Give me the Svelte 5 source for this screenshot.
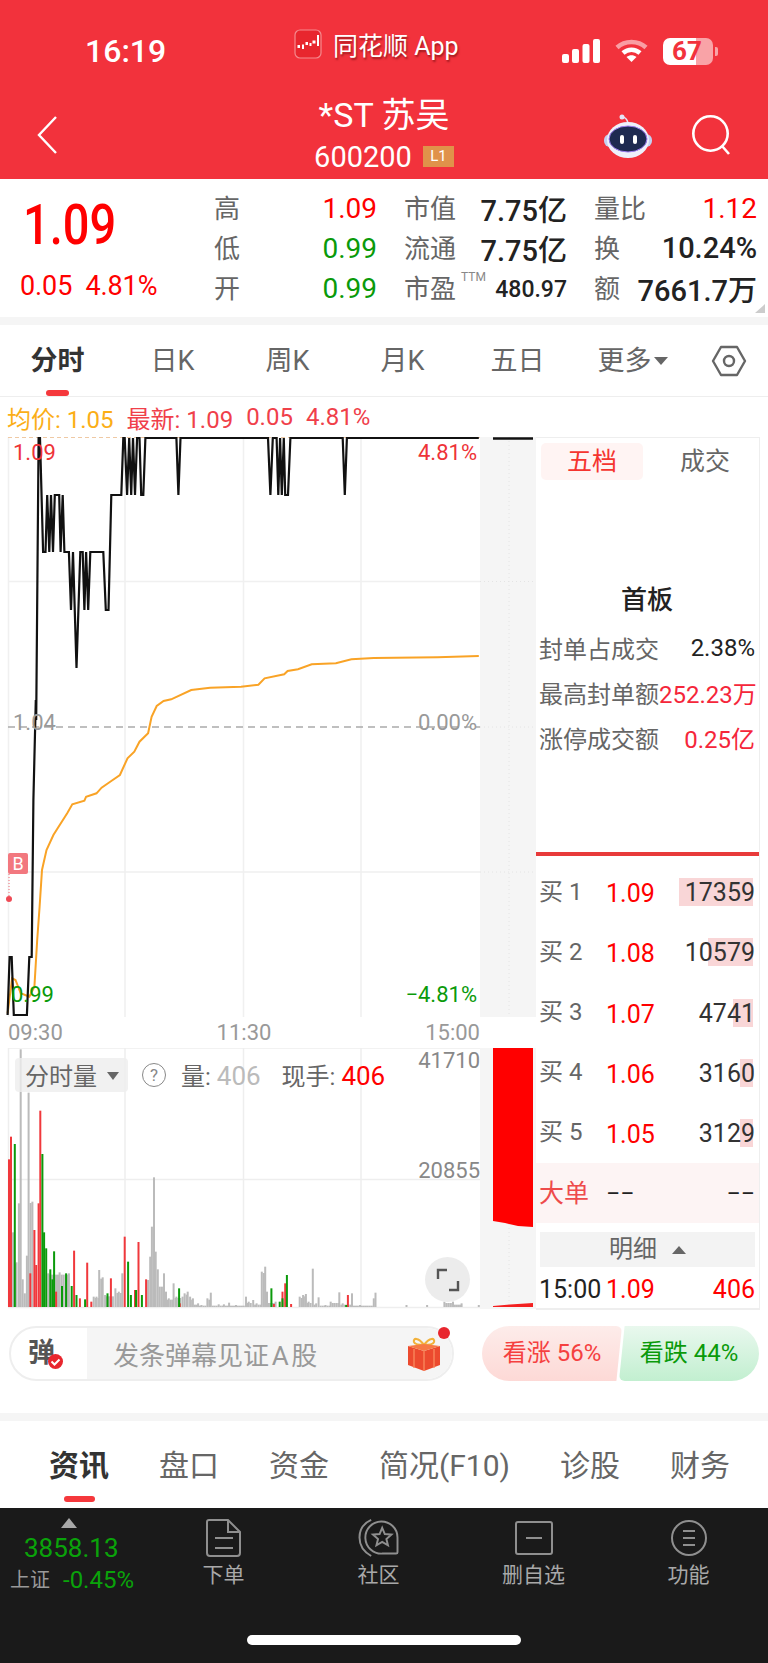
<script>
  // chart points read off the reference, x in crop units (2.903/px), y in page px
  const cx = (x) => +(x / 2.903).toFixed(1);
  const T = 438, A = 495, B = 552, C = 610, D = 668;

  const blackRaw = [
    [22,1015],[28,957],[34,957],[40,1015],[78,1015],[85,957],[92,957],[97,800],[104,700],[105,720],[112,T],[116,T],
    [125,B],[132,B],[137,A],[143,B],[148,A],[154,B],[159,A],[172,A],[176,B],[182,A],[187,B],[200,B],[206,C],[212,B],
    [222,D],[233,B],[240,B],[245,C],[250,B],[256,C],[262,B],[300,B],[307,C],[315,C],[323,A],[352,A],[358,T],[362,T],
    [369,A],[375,T],[381,A],[386,T],[392,A],[398,T],[405,T],[410,A],[416,A],[422,T],[512,T],[518,A],[524,T],
    [778,T],[785,A],[792,T],[803,T],[808,A],[813,T],[818,A],[824,T],[828,A],[836,A],[843,T],[995,T],[1001,A],[1007,T],[1390,T]
  ];
  const blackPath = blackRaw.map(([x, y]) => `${cx(x)},${y}`).join(' ');

  const avgLow = [
    [22,940],[35,835],[45,840],[60,880],[85,890],[100,860],[108,720],[115,620],[122,510],[135,450],[155,405],[170,380],
    [195,340],[210,313],[245,302],[250,290],[280,280],[295,263],[320,245],[348,225],[370,175],[390,155],[405,125],
    [430,100],[440,50],[455,18],[475,3],[497,-2]
  ].map(([x, y]) => `${cx(x)},${(y / 3 + 700).toFixed(1)}`);
  const avgHigh = [
    [555,1110],[610,1103],[700,1100],[750,1094],[768,1075],[825,1063],[835,1053],[865,1048],[905,1033],[975,1030],
    [1020,1018],[1085,1014],[1270,1012],[1390,1008]
  ].map(([x, y]) => `${cx(x)},${(y / 3 + 320).toFixed(1)}`);
  const avgPath = [...avgLow, ...avgHigh].join(' ');

  const vy = (y) => y / 3 + 1040;
  const gray = [[38,577],[48,667],[55,490],[60,28],[66,718],[72,760],[78,647],[83,158],[94,485],[140,700],[173,697],[200,700],[272,770],[280,770],[288,690],[298,712],[305,765],[335,745],[345,755],[355,700],[430,720],[436,650],[441,560],[447,412],[452,635],[458,688],[464,740],[470,740],[476,700],[482,755],[490,775],[504,730],[512,770],[530,770],[536,760],[545,755],[552,770],[560,775],[575,790],[585,795],[602,775],[612,758],[635,793],[650,793],[665,788],[685,795],[714,770],[722,785],[735,780],[745,790],[760,695],[770,680],[775,755],[800,785],[870,770],[880,765],[888,762],[896,785],[908,686],[918,790],[925,772],[945,795],[960,785],[985,757],[995,790],[1022,760],[1045,795],[1085,775],[1090,758],[1180,795],[1240,795],[1290,785],[1315,785],[1340,790],[1390,795]];
  const red = [[26,358],[32,290],[100,570],[88,700],[105,675],[112,490],[117,212],[215,632],[253,668],[322,715],[362,590],[402,606],[424,718],[392,750],[820,755],[828,730],[1010,765],[163,755],[232,775],[265,785],[522,790],[795,792],[845,792]];
  const green = [[43,312],[123,342],[128,577],[134,625],[146,688],[157,634],[152,718],[180,738],[192,700],[208,738],[222,765],[247,778],[312,760],[372,665],[380,765],[395,750],[412,765],[520,745],[788,745],[812,785],[820,775],[833,705],[1005,795]];

  // the minute bars sit side by side, so fill the slots between the read-off peaks
  const grayFill = [];
  gray.forEach(([x, y], i) => {
    const next = gray[i + 1];
    if (!next || next[0] - x > 40) return;
    for (let s = x + 5.7; s < next[0] - 2; s += 5.7) grayFill.push([s, Math.max(y, next[1]) + 4]);
  });

  const bars = [
    ...[...gray, ...grayFill].map(([x, y]) => ({ x: cx(x) - 1, y: vy(Math.min(y, 797)), fill: '#bbbbbb' })),
    ...red.map(([x, y]) => ({ x: cx(x) - 1, y: vy(y), fill: '#f0383c' })),
    ...green.map(([x, y]) => ({ x: cx(x) - 1, y: vy(y), fill: '#0b9a0b' }))
  ];

  const quote = [
    [['高', '1.09', 'up'], ['低', '0.99', 'down'], ['开', '0.99', 'down']],
    [['市值', '7.75亿', 'dark'], ['流通', '7.75亿', 'dark'], ['市盈', '480.97', 'dark ttm']],
    [['量比', '1.12', 'up'], ['换', '10.24%', 'dark'], ['额', '7661.7万', 'dark']]
  ];
  const periods = ['分时', '日K', '周K', '月K', '五日'];
  const seal = [
    ['封单占成交', '2.38%', 'dark'],
    ['最高封单额', '252.23万', 'hot'],
    ['涨停成交额', '0.25亿', 'hot']
  ];
  const bids = [
    ['买 1', '1.09', '17359', 74],
    ['买 2', '1.08', '10579', 45],
    ['买 3', '1.07', '4741', 20],
    ['买 4', '1.06', '3160', 13],
    ['买 5', '1.05', '3129', 13]
  ];
  const infoTabs = ['盘口', '资金', '简况(F10)', '诊股', '财务'];
</script>

<div class="page">
  <header class="head">
    <div class="status">
      <span class="time">16:19</span>
      <div class="app-pill">
        <svg class="app-icon" width="28" height="30" viewBox="0 0 28 30">
          <rect x="1" y="1" width="26" height="28" rx="5" fill="#e8262e" stroke="#f58a8e" stroke-width="1.200" />
          <g fill="#fff">
            <rect x="3.500" y="16" width="2.500" height="3" />
            <rect x="8" y="15.500" width="2" height="4.500" />
            <rect x="11.500" y="13" width="2.500" height="3" />
            <rect x="15.500" y="14" width="2" height="3" />
            <rect x="18.500" y="11.500" width="3" height="3" />
            <rect x="23" y="6" width="2" height="11" />
          </g>
        </svg>
        <span class="app-name">同花顺 App</span>
      </div>
      <div class="sys">
        <svg width="38" height="24" viewBox="0 0 38 24" fill="#fff">
          <rect x="0" y="15" width="7" height="9" rx="2" />
          <rect x="10" y="10" width="7" height="14" rx="2" />
          <rect x="20.500" y="5" width="7" height="19" rx="2" />
          <rect x="31" y="0" width="7" height="24" rx="2" />
        </svg>
        <svg class="wifi" width="33" height="24" viewBox="0 0 33 24" fill="none">
          <path d="M2 8.500C10 1 23 1 31 8.500" stroke="#f99ea3" stroke-width="4.500" />
          <path d="M8 14c5-4.500 12-4.500 17 0" stroke="#fff" stroke-width="4.500" />
          <path d="M16.500 23l-5-5c3-2.500 7-2.500 10 0z" fill="#fff" />
        </svg>
        <div class="battery">
          <div class="battery-body"><span>67</span></div>
          <i></i>
        </div>
      </div>
    </div>
    <nav class="nav">
      <svg class="back" width="20" height="38" viewBox="0 0 20 38" fill="none" stroke="#fff" stroke-width="2.400">
        <path d="M19 1L2 19l17 18" />
      </svg>
      <div class="title">
        <span class="name">*ST 苏吴</span>
        <div class="code"><span>600200</span><b>L1</b></div>
      </div>
      <div class="nav-icons">
        <svg class="robot" width="48" height="44" viewBox="0 0 48 44">
          <path d="M18 3c3 0 5 2 6 6" stroke="#e4e4f6" stroke-width="1.500" fill="none" />
          <circle cx="18" cy="3" r="2.500" fill="#e4e4f6" />
          <rect x="0" y="20" width="48" height="13" rx="6" fill="#c4d0f0" />
          <ellipse cx="24" cy="26" rx="21" ry="18" fill="#eef0fb" />
          <ellipse cx="24" cy="25" rx="19" ry="13" fill="#1e2a50" stroke="#9c7cf0" stroke-width="1" />
          <rect x="16" y="21" width="4" height="9" rx="2" fill="#fff" />
          <rect x="29" y="21" width="4" height="9" rx="2" fill="#fff" />
        </svg>
        <svg width="40" height="40" viewBox="0 0 40 40" fill="none" stroke="#fff" stroke-width="2.600">
          <circle cx="18.500" cy="18.500" r="17.200" />
          <path d="M30 31l7 8" />
        </svg>
      </div>
    </nav>
  </header>

  <section class="quote">
    <div class="last">
      <span class="big">1.09</span>
      <span class="chg">0.05&nbsp;&nbsp;4.81%</span>
    </div>
    {#each quote as col}
      <div class="q-col">
        {#each col as [label, value, tone]}
          <div class="q-row">
            <span class="q-label">{label}{#if tone.includes('ttm')}<sup>TTM</sup>{/if}</span>
            <span class="q-val {tone}">{value}</span>
          </div>
        {/each}
      </div>
    {/each}
    <i class="corner"></i>
  </section>
  <div class="band"></div>

  <div class="periods">
    {#each periods as p, i}
      <span class="period" class:on={i === 0}>{p}</span>
    {/each}
    <span class="period more">更多<i class="caret"></i></span>
    <svg class="hex" width="36" height="32" viewBox="0 0 36 32" fill="none" stroke="#666" stroke-width="2.400" stroke-linejoin="round">
      <path d="M10 2h16l8 14-8 14H10L2 16z" />
      <circle cx="18" cy="16" r="5" />
    </svg>
  </div>

  <div class="legend">
    <span class="avg">均价: 1.05</span>
    <span class="latest">最新: 1.09</span>
    <span class="latest">0.05</span>
    <span class="latest">4.81%</span>
  </div>

  <div class="board">
    <div class="charts">
      <div class="price">
        <svg viewBox="0 437 536 580" width="536" height="580">
          <rect x="480" y="437" width="56" height="580" fill="#f5f5f5" />
          <path d="M8.500 437V1017M125 437V1017M243.500 437V1017M361 437V1017M8 581.500H480M8 872H480" stroke="#f0f0f0" stroke-width="1.500" fill="none" />
          <path d="M480 581.500H536M480 872H536M480 727H536M509 437V1017" stroke="#e4e4e4" stroke-width="1" stroke-dasharray="1 3" fill="none" />
          <path d="M8 437.500H480" stroke="#efc9a4" stroke-width="1" stroke-dasharray="4 3" />
          <path d="M8 727H480" stroke="#aaa" stroke-width="1.500" stroke-dasharray="7 5" />
          <polyline points={avgPath} fill="none" stroke="#f9a326" stroke-width="2" />
          <polyline points={blackPath} fill="none" stroke="#111" stroke-width="2.200" />
          <path d="M493 438.500H533" stroke="#111" stroke-width="2.500" />
          <path d="M9 874V897" stroke="#ef6a72" stroke-width="1" stroke-dasharray="1 2" />
          <circle cx="9" cy="899" r="3" fill="#ef4a55" />
        </svg>
        <span class="tag hi-l">1.09</span>
        <span class="tag hi-r">4.81%</span>
        <span class="tag mid-l">1.04</span>
        <span class="tag mid-r">0.00%</span>
        <span class="tag lo-l">0.99</span>
        <span class="tag lo-r">−4.81%</span>
        <span class="buy-mark">B</span>
      </div>
      <div class="axis"><span>09:30</span><span>11:30</span><span>15:00</span></div>
      <div class="volume">
        <svg viewBox="0 1048 536 261" width="536" height="261">
          <rect x="480" y="1048" width="56" height="261" fill="#f5f5f5" />
          <path d="M8 1048H480M8 1179.500H480M8 1307.500H480M8.500 1048V1307M125 1048V1307M243.500 1048V1307M361 1048V1307" stroke="#eeeeee" stroke-width="1.500" fill="none" />
          <path d="M509 1048V1307" stroke="#e4e4e4" stroke-dasharray="1 3" />
          {#each bars as bar}
            <rect x={bar.x} y={bar.y} width="2" height={1307 - bar.y} fill={bar.fill} />
          {/each}
          <path d="M493 1048H533V1227L518 1226L505 1223L493 1221Z" fill="#ff0000" />
          <path d="M493 1307H533V1303L510 1304.500L493 1306Z" fill="#f32020" />
        </svg>
        <div class="vol-head">
          <span class="vol-pill">分时量<i class="caret big-caret"></i></span>
          <span class="help">?</span>
          <span class="vol-item">量: <em class="muted">406</em></span>
          <span class="vol-item now">现手: <em>406</em></span>
        </div>
        <span class="vol-scale top">41710</span>
        <span class="vol-scale mid">20855</span>
        <span class="expand">
          <svg width="24" height="24" viewBox="0 0 24 24" fill="none" stroke="#555" stroke-width="2.400">
            <path d="M2 11V2h9M22 13v9h-9" />
          </svg>
        </span>
      </div>
    </div>

    <aside class="side">
      <div class="side-tabs">
        <span class="side-tab on">五档</span>
        <span class="side-tab">成交</span>
      </div>
      <div class="seal">
        <h3>首板</h3>
        {#each seal as [label, value, tone]}
          <div class="seal-row"><span>{label}</span><b class={tone}>{value}</b></div>
        {/each}
      </div>
      <div class="rule"></div>
      <div class="bids">
        {#each bids as [label, price, qty, pct]}
          <div class="bid">
            <span class="bid-label">{label}</span>
            <span class="bid-price">{price}</span>
            <span class="bid-qty">
              <i style="width: {pct}px"></i>
              <span>{qty}</span>
            </span>
          </div>
        {/each}
      </div>
      <div class="big-order"><span class="bo-label">大单</span><span class="bo-a">−−</span><span class="bo-b">−−</span></div>
      <div class="detail"><span>明细</span><i class="caret up-caret"></i></div>
      <div class="tick"><span class="tick-time">15:00</span><span class="tick-price">1.09</span><span class="tick-qty">406</span></div>
    </aside>
  </div>

  <div class="barrage">
    <div class="input">
      <div class="dan">弹<span class="check">
        <svg width="15" height="15" viewBox="0 0 15 15"><circle cx="7.500" cy="7.500" r="7.500" fill="#e8262e" /><path d="M3.500 7.500l3 3 5-5" stroke="#fff" stroke-width="2" fill="none" /></svg>
      </span></div>
      <div class="field">
        <span>发条弹幕见证&#8202;A&#8202;股</span>
        <svg class="gift" width="32" height="34" viewBox="0 0 32 34">
          <path d="M16 8C10 0 5 1 6 5c1 3 6 3 10 3zm0 0c6-8 11-7 10-3-1 3-6 3-10 3z" fill="none" stroke="#f2b13a" stroke-width="2.200" />
          <path d="M0 9l16 5 16-5v19l-16 6-16-6z" fill="#ec4a2e" />
          <path d="M0 9l16-2 16 2-16 5z" fill="#f67a45" />
          <path d="M16 14v20M6 12v19M26 12v19" stroke="#f98a5e" stroke-width="1.300" />
        </svg>
      </div>
      <i class="dot"></i>
    </div>
    <div class="vote">
      <span class="bull">看涨 56%</span>
      <span class="bear">看跌 44%</span>
    </div>
  </div>
  <div class="band"></div>

  <div class="info-tabs">
    <span class="info-tab on">资讯</span>
    {#each infoTabs as t}
      <span class="info-tab">{t}</span>
    {/each}
  </div>

  <footer class="bar">
    <div class="index">
      <i class="index-tri"></i>
      <span class="index-val">3858.13</span>
      <div class="index-sub"><span>上证</span><b>-0.45%</b></div>
    </div>
    <div class="action">
      <svg width="36" height="38" viewBox="0 0 36 38" fill="none" stroke="#8f8f8f" stroke-width="2">
        <path d="M3 1h19l12 12v21a3 3 0 0 1-3 3H4a3 3 0 0 1-3-3V3a2 2 0 0 1 2-2z" />
        <path d="M22 1v12h12M9 19h18M9 29h18" />
      </svg>
      <span>下单</span>
    </div>
    <div class="action">
      <svg width="41" height="39" viewBox="-1 -1 41 39" fill="none" stroke="#8f8f8f" stroke-width="2">
        <path d="M12 0C3 4 0 11 0 18c0 8 5 15 12 19" />
        <path d="M23.500 34.500A16.500 16.500 0 1 1 39 18V33a1.500 1.500 0 0 1-1.500 1.500z" />
        <path d="M23.300 8L26 14.400L32.800 15L27.600 19.500L29.200 26L23.300 22.500L17.400 26L19 19.500L13.800 15L20.600 14.400z" />
      </svg>
      <span>社区</span>
    </div>
    <div class="action">
      <svg width="38" height="34" viewBox="0 0 38 34" fill="none" stroke="#8f8f8f" stroke-width="2">
        <rect x="1" y="1" width="36" height="32" rx="2" />
        <path d="M11 17h16" />
      </svg>
      <span>删自选</span>
    </div>
    <div class="action">
      <svg width="36" height="36" viewBox="0 0 36 36" fill="none" stroke="#8f8f8f" stroke-width="2">
        <circle cx="18" cy="18" r="17" />
        <path d="M12 11h12M12 18h12M12 25h12" />
      </svg>
      <span>功能</span>
    </div>
    <i class="home"></i>
  </footer>
</div>

<style>
  :global(body) {
    margin: 0;
    background: #fff;
  }

  .page {
    position: relative;
    width: 768px;
    height: 1663px;
    overflow: hidden;
    display: flex;
    flex-direction: column;
    background: #fff;
    font-family: Roboto, "Noto Sans CJK SC", sans-serif;
    color: #222;
  }

  i {
    display: block;
    font-style: normal;
  }

  /* ─── Header ─────────────────────────────────────────── */

  .head {
    height: 179px;
    flex: none;
    background: #f2323c;
    color: #fff;
  }

  .status {
    height: 90px;
    display: grid;
    grid-template-columns: 209px 268px auto;
    padding-left: 85px;
    align-items: center;
  }

  .time {
    font-size: 32px;
    font-weight: 500;
    padding-top: 12px;
  }

  .app-pill {
    display: flex;
    align-items: center;
    gap: 11px;
    padding-bottom: 2px;
    white-space: nowrap;
  }

  .app-name {
    font-size: 25px;
    text-shadow: 1px 2px 2px rgba(90, 10, 10, 0.55);
  }

  .sys {
    display: flex;
    align-items: center;
    gap: 15px;
    padding-top: 12px;
  }

  .battery {
    display: flex;
    align-items: center;
  }

  .battery-body {
    width: 50px;
    height: 27px;
    border-radius: 7px;
    background: linear-gradient(90deg, #fff 0 67%, #f9a3a7 67%);
    display: flex;
    align-items: center;
    padding-left: 9px;
    box-sizing: border-box;
    color: #f2323c;
    font-size: 26px;
    font-weight: 700;
  }

  .battery i {
    width: 3px;
    height: 9px;
    margin-left: 2px;
    background: #f9a3a7;
    border-radius: 0 2px 2px 0;
  }

  .nav {
    height: 89px;
    display: grid;
    grid-template-columns: 1fr auto 1fr;
    align-items: center;
  }

  .back {
    margin-left: 37px;
  }

  .title {
    display: flex;
    flex-direction: column;
    align-items: center;
    margin-top: -3px;
  }

  .name {
    font-size: 34px;
    line-height: 42px;
  }

  .code {
    display: flex;
    align-items: center;
    gap: 11px;
    font-size: 29px;
    line-height: 32px;
    margin-top: 5px;
  }

  .code b {
    width: 31px;
    height: 21px;
    line-height: 21px;
    background: #e0924a;
    font-size: 15px;
    font-weight: 400;
    text-align: center;
  }

  .nav-icons {
    display: flex;
    justify-content: flex-end;
    align-items: center;
    gap: 40px;
    padding-right: 36px;
  }

  .robot {
    margin-top: 3px;
  }

  /* ─── Quote ──────────────────────────────────────────── */

  .quote {
    position: relative;
    height: 138px;
    flex: none;
    padding-top: 9px;
    box-sizing: border-box;
    display: grid;
    grid-template-columns: 187px 163px 163px 163px;
    column-gap: 27px;
  }

  .last {
    display: flex;
    flex-direction: column;
    align-items: flex-start;
    padding-left: 23px;
  }

  .big {
    font-size: 56px;
    line-height: 56px;
    margin-top: 9px;
    color: #f00;
    font-weight: 500;
    transform: scaleX(0.84);
    transform-origin: left center;
  }

  .chg {
    margin-top: 18px;
    margin-left: -3px;
    font-size: 27px;
    line-height: 30px;
    letter-spacing: -0.100px;
    color: #f00;
    white-space: nowrap;
  }

  .q-col {
    display: grid;
    grid-auto-rows: 40px;
  }

  .q-row {
    display: flex;
    justify-content: space-between;
    align-items: center;
  }

  .q-label {
    position: relative;
    font-size: 26px;
    color: #666;
    padding-bottom: 4px;
  }

  .q-label sup {
    position: absolute;
    left: 57px;
    top: 3px;
    font-size: 12px;
    line-height: 12px;
    color: #888;
  }

  .q-val {
    font-size: 28px;
    white-space: nowrap;
  }

  .up {
    color: #f00;
  }

  .down {
    color: #0a9a0a;
  }

  .dark {
    color: #222;
    font-size: 29px;
    font-weight: 500;
  }

  .q-val.ttm {
    font-size: 23px;
    padding-top: 2px;
  }

  .corner {
    position: absolute;
    right: 3px;
    bottom: 4px;
    border-left: 10px solid transparent;
    border-bottom: 9px solid #ccc;
  }

  .band {
    height: 8px;
    flex: none;
    background: #f5f5f5;
  }

  /* ─── Period tabs ────────────────────────────────────── */

  .periods {
    height: 72px;
    flex: none;
    box-sizing: border-box;
    display: grid;
    grid-template-columns: repeat(6, 115px) auto;
    align-items: center;
    border-bottom: 1px solid #eee;
  }

  .period {
    position: relative;
    height: 72px;
    line-height: 73px;
    text-align: center;
    font-size: 27px;
    color: #666;
  }

  .period.on {
    color: #333;
    font-weight: 700;
  }

  .period.on::after {
    content: "";
    position: absolute;
    left: 46px;
    bottom: 1px;
    width: 23px;
    height: 6px;
    border-radius: 3px;
    background: #f5383c;
  }

  .more {
    display: flex;
    justify-content: center;
    align-items: center;
    gap: 2px;
  }

  .caret {
    display: inline-block;
    border-left: 7px solid transparent;
    border-right: 7px solid transparent;
    border-top: 8px solid #666;
  }

  .hex {
    margin-left: 21px;
  }

  .legend {
    height: 40px;
    flex: none;
    display: flex;
    align-items: center;
    gap: 13px;
    padding-left: 7px;
    font-size: 24px;
    white-space: nowrap;
  }

  .avg {
    color: #fbae17;
  }

  .latest {
    color: #f0404a;
  }

  /* ─── Charts ─────────────────────────────────────────── */

  .board {
    display: flex;
    height: 873px;
    flex: none;
  }

  .charts {
    width: 536px;
    flex: none;
  }

  .price {
    position: relative;
    height: 580px;
  }

  .price svg,
  .volume svg {
    display: block;
  }

  .tag {
    position: absolute;
    font-size: 22px;
    line-height: 26px;
  }

  .hi-l {
    left: 13px;
    top: 3px;
    color: #ee3338;
  }

  .hi-r {
    right: 59px;
    top: 3px;
    color: #ee3338;
  }

  .mid-l {
    left: 13px;
    top: 273px;
    color: #999;
  }

  .mid-r {
    right: 59px;
    top: 273px;
    color: #999;
  }

  .lo-l {
    left: 11px;
    top: 545px;
    color: #0a9a0a;
  }

  .lo-r {
    right: 59px;
    top: 545px;
    color: #0a9a0a;
  }

  .buy-mark {
    position: absolute;
    left: 8px;
    top: 416px;
    width: 20px;
    height: 21px;
    line-height: 21px;
    background: #f2787f;
    color: #fff;
    font-size: 18px;
    text-align: center;
    border-radius: 2px;
  }

  .axis {
    height: 31px;
    display: flex;
    justify-content: space-between;
    align-items: center;
    width: 472px;
    margin-left: 8px;
    font-size: 22px;
    color: #999;
  }

  .volume {
    position: relative;
    height: 261px;
  }

  .vol-head {
    position: absolute;
    left: 15px;
    top: 9px;
    display: flex;
    align-items: center;
    font-size: 24px;
    color: #666;
    white-space: nowrap;
  }

  .vol-pill {
    width: 113px;
    height: 34px;
    display: flex;
    align-items: center;
    gap: 10px;
    padding-left: 10px;
    box-sizing: border-box;
    border-radius: 4px;
    background: rgba(238, 238, 238, 0.8);
    font-size: 24px;
  }

  .big-caret {
    margin-top: 2px;
    border-left-width: 6px;
    border-right-width: 6px;
  }

  .help {
    width: 22px;
    height: 22px;
    margin: 0 15px 0 14px;
    border: 1.500px solid #888;
    border-radius: 50%;
    line-height: 22px;
    text-align: center;
    font-size: 17px;
    color: #888;
  }

  .vol-item em {
    font-style: normal;
    font-size: 26px;
    color: #f00;
  }

  .vol-item em.muted {
    color: #bbb;
  }

  .now {
    margin-left: 21px;
  }

  .vol-scale {
    position: absolute;
    right: 56px;
    font-size: 22px;
    line-height: 26px;
    color: #888;
  }

  .vol-scale.top {
    top: 0;
  }

  .vol-scale.mid {
    top: 110px;
  }

  .expand {
    position: absolute;
    left: 425px;
    top: 209px;
    width: 45px;
    height: 45px;
    border-radius: 50%;
    background: rgba(234, 234, 234, 0.9);
    display: flex;
    align-items: center;
    justify-content: center;
  }

  /* ─── Side panel ─────────────────────────────────────── */

  .side {
    width: 224px;
    flex: none;
    box-sizing: border-box;
    display: flex;
    flex-direction: column;
    border-top: 1px solid #eee;
    border-right: 1px solid #eee;
    border-bottom: 2px solid #eee;
  }

  .side-tabs {
    display: flex;
    gap: 11px;
    padding: 5px 0 0 5px;
    height: 43px;
    box-sizing: border-box;
    flex: none;
  }

  .side-tab {
    flex: none;
    width: 102px;
    height: 37px;
    line-height: 38px;
    text-align: center;
    font-size: 25px;
    color: #666;
    border-radius: 5px;
  }

  .side-tab.on {
    background: #fff4f3;
    color: #f5352f;
  }

  .seal {
    flex: 1;
    padding: 99px 4px 0 3px;
  }

  .seal h3 {
    margin: 0 0 5px;
    height: 40px;
    line-height: 40px;
    text-align: center;
    font-size: 26px;
    font-weight: 500;
    color: #222;
  }

  .seal-row {
    height: 45px;
    display: flex;
    justify-content: space-between;
    align-items: center;
    font-size: 24px;
    color: #666;
    white-space: nowrap;
  }

  .seal-row b {
    font-weight: 400;
  }

  .seal-row b.dark {
    font-size: 24px;
    font-weight: 400;
  }

  .seal-row b.hot {
    color: #f5263a;
  }

  .rule {
    height: 4px;
    background: #e83a3a;
    flex: none;
  }

  .bids {
    flex: none;
    padding-top: 6px;
  }

  .bid {
    height: 60.200px;
    display: grid;
    grid-template-columns: 67px 60px 1fr;
    align-items: center;
    padding: 0 4px 0 3px;
    font-size: 25px;
  }

  .bid-label {
    font-size: 24px;
    color: #666;
    padding-bottom: 6px;
  }

  .bid-price {
    color: #f00;
    padding-top: 3px;
  }

  .bid-qty {
    position: relative;
    text-align: right;
    color: #333;
  }

  .bid-qty i {
    position: absolute;
    right: 2px;
    top: 0;
    height: 28px;
    background: #f9d6d7;
  }

  .bid-qty span {
    position: relative;
    line-height: 30px;
    height: 28px;
    display: block;
  }

  .big-order {
    height: 60px;
    flex: none;
    background: #fdf4f4;
    display: grid;
    grid-template-columns: 67px 1fr auto;
    align-items: center;
    padding: 0 4px 0 3px;
    font-size: 25px;
  }

  .bo-label {
    color: #ee4b4b;
    padding-bottom: 4px;
  }

  .detail {
    flex: none;
    height: 35px;
    margin: 9px 4px 0 4px;
    background: #f3f3f3;
    display: flex;
    justify-content: center;
    align-items: center;
    gap: 15px;
    font-size: 24px;
    color: #666;
  }

  .detail span {
    padding-bottom: 6px;
  }

  .up-caret {
    border-top: 0;
    border-bottom: 8px solid #666;
  }

  .tick {
    flex: none;
    height: 37px;
    margin-top: 4px;
    display: grid;
    grid-template-columns: 67px 60px 1fr;
    align-items: center;
    padding: 0 4px 0 3px;
    font-size: 25px;
  }

  .tick-price,
  .tick-qty {
    color: #f00;
  }

  .tick-qty {
    text-align: right;
  }

  /* ─── Barrage ────────────────────────────────────────── */

  .barrage {
    height: 103px;
    flex: none;
    display: flex;
    padding-top: 16px;
    box-sizing: border-box;
  }

  .input {
    position: relative;
    width: 445px;
    height: 55px;
    margin-left: 9px;
    box-sizing: border-box;
    border: 2px solid #eee;
    border-radius: 28px;
    display: flex;
  }

  .dan {
    position: relative;
    width: 76px;
    padding-left: 17px;
    line-height: 50px;
    font-size: 27px;
    font-weight: 700;
    color: #555;
    box-sizing: border-box;
  }

  .check {
    position: absolute;
    left: 37px;
    top: 26px;
    line-height: 0;
  }

  .field {
    flex: 1;
    display: flex;
    align-items: center;
    justify-content: space-between;
    padding: 0 12px 0 26px;
    background: #f5f5f5;
    border-radius: 0 26px 26px 0;
    font-size: 26px;
    color: #999;
  }

  .dot {
    position: absolute;
    right: 2px;
    top: -1px;
    width: 12px;
    height: 12px;
    border-radius: 50%;
    background: #e8262e;
  }

  .vote {
    display: flex;
    margin-left: 28px;
    height: 55px;
    font-size: 24px;
  }

  .bull,
  .bear {
    width: 140px;
    line-height: 55px;
    text-align: center;
  }

  .bull {
    color: #f5403f;
    background: linear-gradient(180deg, #fdecea, #fdd9d6);
    border-radius: 28px 6px 6px 28px;
    clip-path: polygon(0 0, 100% 0, 96% 100%, 0 100%);
  }

  .bear {
    margin-left: -3px;
    color: #0a9a0a;
    background: linear-gradient(180deg, #e9f8ee, #c2efd0);
    border-radius: 6px 28px 28px 6px;
    clip-path: polygon(4% 0, 100% 0, 100% 100%, 0 100%);
  }

  /* ─── Info tabs ──────────────────────────────────────── */

  .info-tabs {
    height: 87px;
    flex: none;
    display: flex;
    gap: 50px;
    padding-left: 49px;
  }

  .info-tab {
    position: relative;
    line-height: 90px;
    font-size: 30px;
    color: #666;
    white-space: nowrap;
  }

  .info-tab.on {
    color: #333;
    font-weight: 700;
  }

  .info-tab.on::after {
    content: "";
    position: absolute;
    left: 15px;
    bottom: 6px;
    width: 31px;
    height: 6px;
    border-radius: 3px;
    background: #f5383c;
  }

  /* ─── Bottom bar ─────────────────────────────────────── */

  .bar {
    position: relative;
    flex: 1;
    background: #1a1a1a;
    display: grid;
    grid-template-columns: 146px repeat(4, 155px);
    align-items: start;
  }

  .index {
    display: flex;
    flex-direction: column;
    padding-left: 10px;
  }

  .index-tri {
    margin: 10px 0 0 51px;
    width: 0;
    border-left: 8px solid transparent;
    border-right: 8px solid transparent;
    border-bottom: 10px solid #a8a8a8;
  }

  .index-val {
    margin: 4px 0 0 14px;
    font-size: 26px;
    line-height: 32px;
    color: #0aa30a;
  }

  .index-sub {
    display: flex;
    align-items: center;
    gap: 13px;
    margin-top: 1px;
    font-size: 24px;
    line-height: 30px;
    color: #999;
    white-space: nowrap;
  }

  .index-sub span {
    font-size: 20px;
  }

  .index-sub b {
    font-weight: 400;
    color: #0aa30a;
  }

  .action {
    display: flex;
    flex-direction: column;
    align-items: center;
    height: 85px;
    padding-top: 11px;
    box-sizing: border-box;
    font-size: 21px;
    color: #a8a8a8;
  }

  .action svg {
    height: 38px;
  }

  .action span {
    margin-top: 5px;
    line-height: 26px;
  }

  .home {
    position: absolute;
    left: 247px;
    top: 127px;
    width: 274px;
    height: 10px;
    border-radius: 5px;
    background: #fff;
  }
</style>
